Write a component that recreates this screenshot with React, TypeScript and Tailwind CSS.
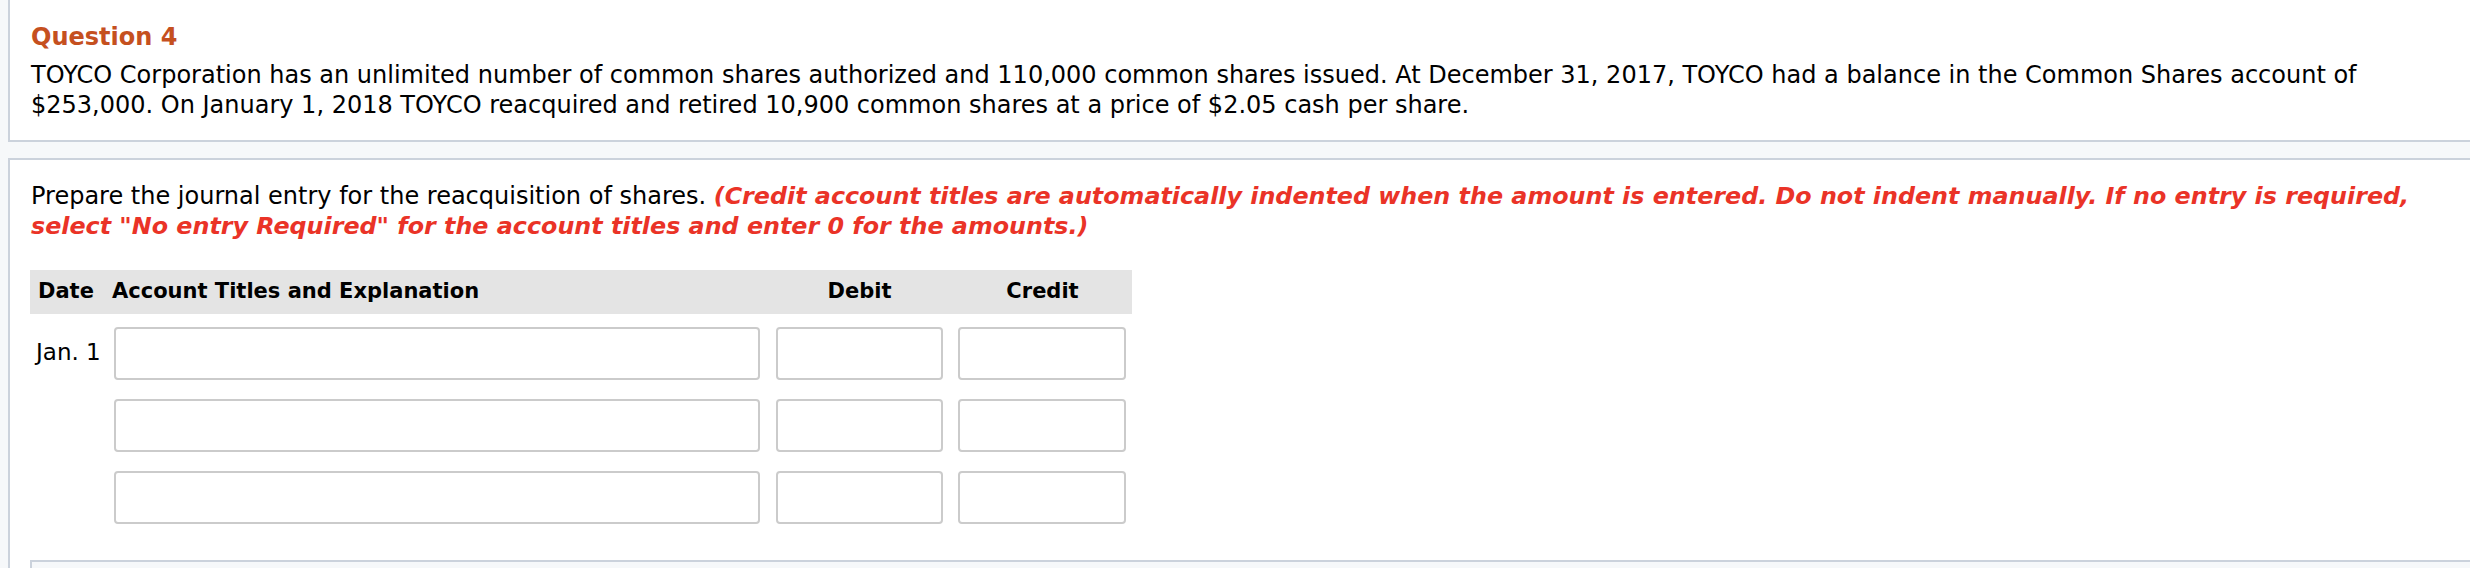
const rows = [{ date: "Jan. 1" }, { date: "" }, { date: "" }];

function EntryRow({ date }: { date: string }) {
  return (
    <div className="grid grid-cols-[68px_646px_167px_167px] gap-x-[16px] items-center">
      <div className="pl-[6px] text-[23px] leading-[30px] -mt-[4px] whitespace-nowrap">{date}</div>
      <input type="text" className="h-[53px] border-2 border-[#cbcbcb] rounded-[4px] bg-white outline-none" />
      <input type="text" className="h-[53px] border-2 border-[#cbcbcb] rounded-[4px] bg-white outline-none" />
      <input type="text" className="h-[53px] border-2 border-[#cbcbcb] rounded-[4px] bg-white outline-none -ml-[1px]" />
    </div>
  );
}

export default function App() {
  return (
    <div className="min-h-screen overflow-hidden bg-[#f6f8fa] pl-2 text-black font-['DejaVu_Sans','Verdana',sans-serif]">
      {/* question text */}
      <section className="bg-white border-l-2 border-b-2 border-[#cbd2dc] pt-[22px] pb-[20px] pl-[21px]">
        <h2 className="text-[24px] leading-[30px] font-bold text-[#c5501f]">Question 4</h2>
        <p className="mt-[8px] text-[24px] leading-[30px] whitespace-nowrap">
          TOYCO Corporation has an unlimited number of common shares authorized and 110,000 common shares issued. At
          December 31, 2017, TOYCO had a balance in the Common Shares account of
          <br />
          $253,000. On January 1, 2018 TOYCO reacquired and retired 10,900 common shares at a price of $2.05 cash per
          share.
        </p>
      </section>

      {/* journal entry part */}
      <section className="mt-4 bg-white border-l-2 border-t-2 border-[#cbd2dc] pt-[21px] pl-[20px]">
        <p className="pl-[1px] text-[24px] leading-[30px] whitespace-nowrap">
          Prepare the journal entry for the reacquisition of shares.{" "}
          <span className="font-bold italic text-[23.8px] text-[#ea3327]">
            (Credit account titles are automatically indented when the amount is entered. Do not indent manually. If no
            entry is required,
            <br />
            select "No entry Required" for the account titles and enter 0 for the amounts.)
          </span>
        </p>

        <div className="mt-[29px] w-[1102px]">
          <div className="grid grid-cols-[68px_646px_167px_167px] gap-x-[16px] items-center h-[44px] bg-[#e4e4e4] text-[21px] font-bold">
            <div className="pl-[8px]">Date</div>
            <div className="-ml-[2px]">Account Titles and Explanation</div>
            <div className="text-center">Debit</div>
            <div className="text-center">Credit</div>
          </div>
          <div className="mt-[13px] flex flex-col gap-y-[19px]">
            {rows.map((r, i) => (
              <EntryRow key={i} date={r.date} />
            ))}
          </div>
        </div>

        <div className="mt-[36px] h-[20px] bg-[#f6f8fa] border-l-2 border-t-2 border-[#cbd2dc]" />
      </section>
    </div>
  );
}
